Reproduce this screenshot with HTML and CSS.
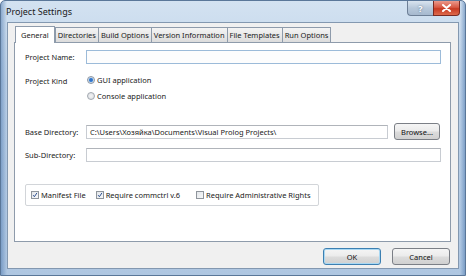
FILE: index.html
```html
<!DOCTYPE html>
<html>
<head>
<meta charset="utf-8">
<link rel="stylesheet" href="styles.css">
</head>
<body>
<div class="window">
  <div class="titlebar">
    <span class="title">Project Settings</span>
    <div class="caption-buttons">
      <div class="cap help">?</div>
      <div class="cap close">
        <svg width="9" height="8" viewBox="0 0 9 8"><path d="M1 1 L8 7 M8 1 L1 7" stroke="#fff" stroke-width="2" stroke-linecap="round"/></svg>
      </div>
    </div>
  </div>
  <div class="client">
    <div class="tabs">
      <div class="tab active">General</div>
      <div class="tab">Directories</div>
      <div class="tab">Build Options</div>
      <div class="tab">Version Information</div>
      <div class="tab">File Templates</div>
      <div class="tab">Run Options</div>
    </div>
    <div class="panel">
      <div class="row r-name">
        <span class="label">Project Name:</span>
        <div class="input focus"></div>
      </div>
      <div class="row r-kind">
        <span class="label">Project Kind</span>
        <div class="radios">
          <div class="radio-item"><span class="radio on"></span><span>GUI application</span></div>
          <div class="radio-item"><span class="radio"></span><span>Console application</span></div>
        </div>
      </div>
      <div class="row r-base">
        <span class="label">Base Directory:</span>
        <div class="input text">C:\Users\Хозяйка\Documents\Visual Prolog Projects\</div>
        <div class="btn browse">Browse...</div>
      </div>
      <div class="row r-sub">
        <span class="label">Sub-Directory:</span>
        <div class="input"></div>
      </div>
      <div class="group">
        <div class="check-item c1"><span class="check on"><svg width="8" height="8" viewBox="0 0 8 8"><path d="M1.5 4.2 L3.2 6.3 L6.6 1.2" fill="none" stroke="#2a4d8f" stroke-width="1.3"/></svg></span><span>Manifest File</span></div>
        <div class="check-item c2"><span class="check on"><svg width="8" height="8" viewBox="0 0 8 8"><path d="M1.5 4.2 L3.2 6.3 L6.6 1.2" fill="none" stroke="#2a4d8f" stroke-width="1.3"/></svg></span><span>Require commctrl v.6</span></div>
        <div class="check-item c3"><span class="check"></span><span>Require Administrative Rights</span></div>
      </div>
    </div>
    <div class="footer">
      <div class="btn ok">OK</div>
      <div class="btn cancel">Cancel</div>
    </div>
  </div>
</div>
</body>
</html>
```
FILE: styles.css
```css
* { box-sizing: border-box; }
body {
  margin: 0;
  font-family: "Noto Sans", "Open Sans", sans-serif;
  font-size: 7.5px;
  color: #1a1a1a;
  background: #fff;
}
.window {
  width: 466px;
  height: 276px;
  border: 1px solid #5a7799;
  border-radius: 5px 5px 0 0;
  background:
    linear-gradient(90deg, rgba(70,115,170,0.5) 0, rgba(70,115,170,0) 6px, rgba(70,115,170,0) 459px, rgba(70,115,170,0.5) 464px),
    linear-gradient(180deg, #d3e2f1 0%, #bcd1e8 30%, #afc7e2 100%);
  display: flex;
  flex-direction: column;
}
.titlebar {
  height: 21px;
  display: flex;
  align-items: flex-start;
  padding-left: 5px;
}
.title {
  font-size: 9px;
  margin-top: 4px;
  color: #1a1a1a;
}
.caption-buttons {
  margin-left: auto;
  margin-right: 5px;
  display: flex;
}
.cap {
  height: 15px;
  display: flex;
  align-items: center;
  justify-content: center;
  border: 1px solid #6d7f96;
  border-top: none;
}
.help {
  width: 26px;
  border-radius: 0 0 0 4px;
  border-right: none;
  background: linear-gradient(180deg, #d9e4ef 0%, #b7c8da 50%, #a6b9cf 100%);
  color: #fff;
  font-weight: bold;
  font-size: 9px;
  text-shadow: 0 0 2px #51657c;
}
.close {
  width: 27px;
  border-radius: 0 0 4px 0;
  border-color: #7a2a22;
  background: linear-gradient(180deg, #eb9a8c 0%, #d85a45 45%, #c73a22 55%, #dd6a4c 100%);
}
.client {
  flex: 1;
  margin: 0 6px 6px 6px;
  background: #f0f0f0;
  border: 1px solid #8398b0;
  display: flex;
  flex-direction: column;
  padding: 2px 7px 0 6px;
}
.tabs {
  display: flex;
  align-items: flex-end;
  height: 18px;
  margin-left: 1px;
  margin-bottom: -1px;
  position: relative;
  z-index: 1;
}
.tab {
  height: 15px;
  padding: 0 2px;
  border: 1px solid #8e9bab;
  border-bottom: none;
  margin-right: -1px;
  background: linear-gradient(180deg, #f4f4f4 0%, #e9e9e9 50%, #dcdcdc 100%);
  display: flex;
  align-items: center;
  margin-bottom: 1px;
}
.tab.active {
  height: 17px;
  margin-bottom: 0;
  background: #fff;
  padding: 0 5px;
  margin-right: 0;
}
.panel {
  height: 200px;
  background: #fff;
  border: 1px solid #8e9bab;
  padding: 7px 9px 0 10px;
  display: flex;
  flex-direction: column;
}
.row {
  display: flex;
  align-items: center;
}
.label {
  width: 61px;
  flex: none;
}
.input {
  flex: 1;
  height: 14px;
  border: 1px solid #c8ccd2;
  border-top-color: #b0b4ba;
  background: #fff;
}
.input.focus {
  border-color: #9cbbd9;
  background: #fdfdfd;
}
.input.text {
  display: flex;
  align-items: center;
  padding-left: 3px;
}
.r-name { height: 14px; }
.r-kind {
  margin-top: 8px;
  align-items: flex-start;
}
.r-kind .label { margin-top: 4px; }
.radios { display: flex; flex-direction: column; margin-left: 1px; }
.radio-item {
  height: 16px;
  display: flex;
  align-items: center;
  gap: 2px;
}
.radio {
  width: 8px;
  height: 8px;
  border-radius: 50%;
  border: 1px solid #a2a8b0;
  background: radial-gradient(circle, #f4f4f4 0, #d9dde2 100%);
}
.radio.on {
  border-color: #8b96a3;
  background: radial-gradient(circle, #2f62b8 0, #3e86d8 1.6px, #d6dee8 2.6px, #eef1f4 100%);
}
.r-base {
  margin-top: 19px;
  height: 17px;
}
.r-base .input { flex: none; width: 302px; }
.btn {
  display: flex;
  align-items: center;
  justify-content: center;
  border: 1px solid #7b7f86;
  border-radius: 3px;
  background: linear-gradient(180deg, #f5f5f5 0%, #ebebeb 48%, #dcdcdc 52%, #d0d0d0 100%);
  color: #111;
}
.browse {
  width: 46px;
  height: 17px;
  margin-left: 6px;
}
.r-sub {
  margin-top: 8px;
  height: 14px;
}
.group {
  margin-top: 22px;
  width: 294px;
  height: 22px;
  border: 1px solid #d2d5d9;
  border-radius: 2px;
  display: flex;
  align-items: center;
  padding-left: 5px;
}
.check-item {
  display: flex;
  align-items: center;
  gap: 2px;
}
.c2 { margin-left: 10px; }
.c3 { margin-left: 16px; }
.check {
  width: 8px;
  height: 8px;
  border: 1px solid #8f959c;
  background: linear-gradient(135deg, #e3e6ea 0%, #f7f8f9 100%);
  display: flex;
  align-items: center;
  justify-content: center;
}
.check svg { display: block; }
.footer {
  display: flex;
  justify-content: flex-end;
  gap: 11px;
  margin-top: 6px;
  padding-right: 1px;
}
.footer .btn {
  width: 58px;
  height: 17px;
}
.ok {
  border-color: #3c7fb1;
  box-shadow: inset 0 0 0 1px #a9d8f3;
}
```
